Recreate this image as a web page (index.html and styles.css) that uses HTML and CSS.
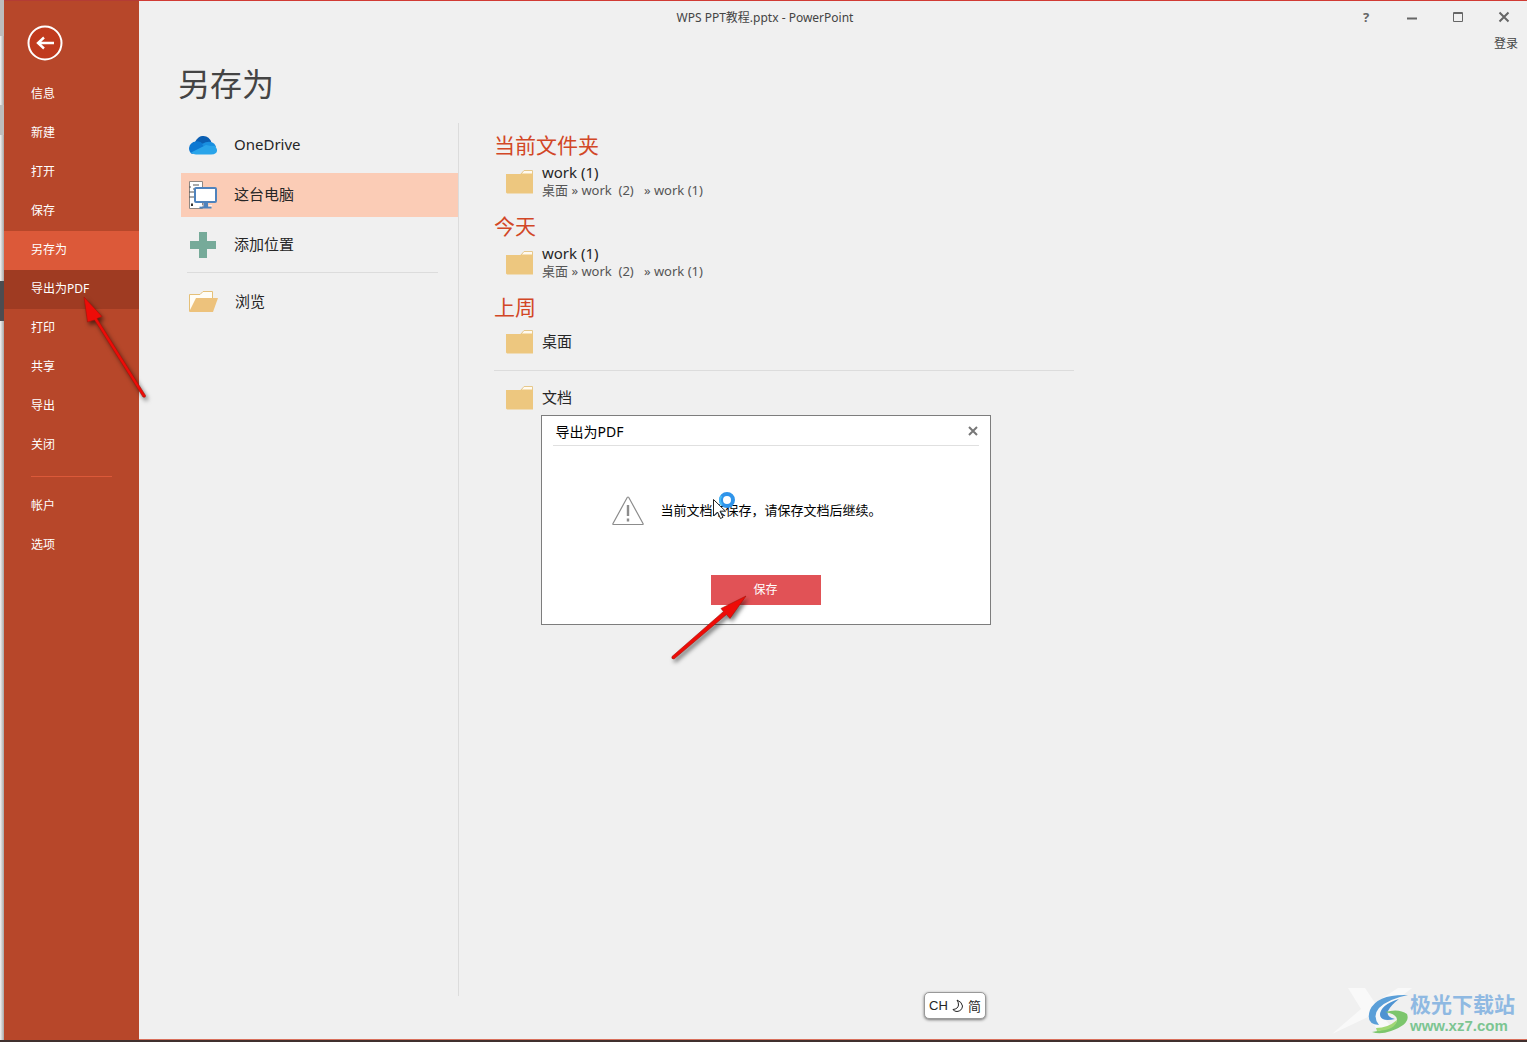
FILE: index.html
```html
<!DOCTYPE html>
<html lang="zh-CN">
<head>
<meta charset="utf-8">
<title>WPS PPT教程.pptx - PowerPoint</title>
<link rel="stylesheet" href="styles.css">
</head>
<body>
<svg class="defs" aria-hidden="true">
  <symbol id="folder" viewBox="0 0 28 25">
    <path d="M15 5 18 1.500H26.500V7H15z" fill="#fffaf0" stroke="#e6c88c"/>
    <path d="M0 5H14L16 4.500H27V24.500H1L0 23.500z" fill="#edc77f"/>
  </symbol>
</svg>
<div class="window">
  <div class="desktop-edge"><span class="edge-mark edge-top"></span><span class="edge-mark edge-mid"></span><span class="edge-mark edge-dark"></span></div>
  <aside class="sidebar">
    <button class="back" type="button" aria-label="返回">
      <svg width="36" height="36" viewBox="0 0 36 36" fill="none" stroke="#fff"><circle cx="18" cy="18" r="16.500" fill="#c03a1e" stroke-width="2"/><path d="M11 18H27M17 12.500 11 18 17 23.500" stroke-width="2.400"/></svg>
    </button>
    <nav class="menu">
      <a href="#">信息</a>
      <a href="#">新建</a>
      <a href="#">打开</a>
      <a href="#">保存</a>
      <a href="#" class="selected">另存为</a>
      <a href="#" class="hovered">导出为PDF
        <svg class="pointer-nav" width="76" height="116" viewBox="0 0 76 116"><path d="M4 4 22 23.500 17 25.500 65.500 102.500Q66 105 63 104L14.500 27 7.500 29z" fill="#ee0c08" stroke="#a51208" stroke-width=".6"/></svg>
      </a>
      <a href="#">打印</a>
      <a href="#">共享</a>
      <a href="#">导出</a>
      <a href="#">关闭</a>
      <hr>
      <a href="#">帐户</a>
      <a href="#">选项</a>
    </nav>
  </aside>
  <main class="backstage">
    <header class="titlebar">
      <div class="title">WPS PPT教程.pptx - PowerPoint</div>
      <div class="controls">
        <button type="button" class="help" aria-label="帮助">?</button>
        <button type="button" aria-label="最小化"><svg width="12" height="12"><path d="M1 7.500H11" stroke="#666" stroke-width="2"/></svg></button>
        <button type="button" aria-label="最大化"><svg width="12" height="12"><path d="M1.500 1.500H10.500V10.500H1.500zM1 2.500H11" fill="none" stroke="#666"/></svg></button>
        <button type="button" aria-label="关闭"><svg width="12" height="12"><path d="M1.500 1.500 10.500 10.500M10.500 1.500 1.500 10.500" stroke="#666" stroke-width="2"/></svg></button>
      </div>
    </header>
    <a href="#" class="login">登录</a>
    <h1>另存为</h1>
    <div class="content">
      <section class="places">
        <button type="button"><svg width="28" height="28" viewBox="0 0 28 28">
          <path d="M6 11Q9 5.500 13 5Q20 4 22.500 11.500L15 18z" fill="#0a5eb2"/>
          <path d="M0 17Q1 11 7 10.500Q11 9.500 14 13L19 16 3 23Q0 21 0 17z" fill="#0d78d2"/>
          <path d="M13 13Q18 10 22 11 26 12 27 16L16 17z" fill="#198fe0"/>
          <path d="M2 21.500 17 14Q20 15 26 15 29.500 19 27 22 25 23.500 22 23.500H7Q4.500 23.500 2 21.500z" fill="#29a4ea"/></svg><span>OneDrive</span></button>
        <button type="button" class="current"><svg width="28" height="28" viewBox="0 0 28 28">
          <path d="M.5.5H13.500V27.500H.5z" fill="#fff" stroke="#8f8883"/><path d="M4 4H10M4 8H8M0 6H2M0 11H6M0 16H5" stroke="#555"/><path d="M3 22.500V25" stroke="#333" stroke-width="2"/>
          <rect x="6" y="7" width="21" height="14" rx="1" fill="#fff" stroke="#4f83bd" stroke-width="2"/><path d="M14.500 22H19V25.500H22.500V27.500H10.500V25.500H14.500z" fill="#4f83bd"/><path d="M10 24.800H14M19.500 24.800H23" stroke="#fff"/></svg><span>这台电脑</span></button>
        <button type="button"><svg width="28" height="28" viewBox="0 0 28 28"><path d="M10 1H18V10H27V18H18V27H10V18H1V10H10z" fill="#76aa99"/></svg><span>添加位置</span></button>
        <hr>
        <button type="button"><svg width="29" height="28" viewBox="0 0 29 28"><path d="M.5 23V6.500H11L14 3.500H23.500V13" fill="#fffdf6" stroke="#e5c078"/><path d="M7 10H29L24 24H0z" fill="#edc27c"/></svg><span>浏览</span></button>
      </section>
      <section class="recent">
        <h2>当前文件夹</h2>
        <a href="#" class="entry detailed"><svg width="28" height="25"><use href="#folder"/></svg><span><b>work (1)</b><small>桌面 » work&nbsp; (2)&nbsp; &nbsp;» work (1)</small></span></a>
        <h2>今天</h2>
        <a href="#" class="entry detailed"><svg width="28" height="25"><use href="#folder"/></svg><span><b>work (1)</b><small>桌面 » work&nbsp; (2)&nbsp; &nbsp;» work (1)</small></span></a>
        <h2>上周</h2>
        <a href="#" class="entry"><svg width="28" height="25"><use href="#folder"/></svg><span><b>桌面</b></span></a>
        <hr>
        <a href="#" class="entry"><svg width="28" height="25"><use href="#folder"/></svg><span><b>文档</b></span></a>
      </section>
    </div>
  </main>
</div>
<footer class="taskbar"></footer>

<section class="modal" role="dialog" aria-labelledby="modal-title">
  <header><h3 id="modal-title">导出为PDF</h3>
    <button type="button" class="dismiss" aria-label="关闭"><svg width="10" height="10"><path d="M1 1 9 9M9 1 1 9" stroke="#777" stroke-width="2"/></svg></button></header>
  <div class="message">
    <svg width="32" height="30" viewBox="0 0 32 30" fill="none" stroke="#8c8c8c"><path d="M15.200 1.500Q16 .5 16.800 1.500L31 27.500Q31.500 28.500 30.500 28.500H1.500Q.5 28.500 1 27.500z" stroke-width="1.200"/><path d="M16 9V20M16 22.500V25.500" stroke-width="2.400"/></svg>
    <p>当前文档未保存，请保存文档后继续。</p>
  </div>
  <button type="button" class="save">保存</button>
  <svg class="cursor" width="26" height="32" viewBox="0 0 26 32"><circle cx="15" cy="9" r="6" fill="#fff" stroke="#2f94ea" stroke-width="4"/><path d="M9.500 5A7 7 0 0 0 10 14" fill="none" stroke="#48bdf5" stroke-width="2"/><path d="M1.500 8.500V25L5.500 21 8.500 27.500 11 26.300 8 20.200H13.500z" fill="#fff" stroke="#222"/></svg>
  <svg class="pointer-save" width="90" height="76" viewBox="0 0 90 76"><path d="M79 4 63 26.500 59.500 22.500 7 67Q4 67 5 64.500L56.500 19.500 54 16.500z" fill="#ee0c08" stroke="#a51208" stroke-width=".6"/></svg>
</section>

<div class="ime">CH <svg width="12" height="14" viewBox="0 0 12 14"><path d="M5 1Q10 3 10.500 7 10 12 5 12.500 2 12.500 1 10.500 6 10 6.500 6 6.500 3 5 1z" fill="none" stroke="#222"/></svg> 简</div>

<div class="watermark">
  <svg class="ghost" width="100" height="52" viewBox="0 0 100 52"><path d="M16 2H33L43 17 66 2H80L48 27 61 43H45L36 31 0 48 29 23z" fill="#fff" opacity=".6"/></svg>
  <svg class="swirl" width="42" height="42" viewBox="0 0 42 42"><path d="M40 2Q9 1 2 17Q-3 31 11 32Q4 23 11 15 20 6 40 2z" fill="#5b9fd8"/><path d="M31 6Q12 12 12 22Q13 29 27 26Q18 24 20 18 23 12 31 6z" fill="#4e93d2"/><path d="M17 19Q31 15 39 21Q43 31 23 38Q12 42 4 39Q28 35 29 27Q29 21 17 19z" fill="#7cc66d"/><path d="M8 35Q20 35 29 27Q28 37 9 38z" fill="#a1d874"/></svg>
  <div class="brand"><strong>极光下载站</strong><span>www.xz7.com</span></div>
</div>
</body>
</html>
```
FILE: styles.css
```css
* { box-sizing: border-box; }

body {
  margin: 0;
  min-height: 100vh;
  display: flex;
  flex-direction: column;
  position: relative;
  background: #f0f0f0;
  color: #262626;
  font-family: "Noto Sans", "Noto Sans CJK SC", sans-serif;
  font-size: 12px;
}

button {
  border: 0;
  padding: 0;
  background: none;
  color: inherit;
  font: inherit;
}

a { color: inherit; text-decoration: none; }
h1, h2, h3, p { margin: 0; font-weight: 400; }
hr { border: 0; height: 1px; margin: 0; background: #dcdcdc; }
svg { display: block; flex: none; }
.defs { position: absolute; width: 0; height: 0; }

.window { flex: 1; display: flex; }

.desktop-edge {
  position: relative;
  width: 4px;
  background: linear-gradient(90deg, #f2f2f2, #a8a8a8);
}
.edge-mark { position: absolute; left: 0; width: 4px; background: #bdbdbd; }
.edge-top { top: 0; height: 36px; }
.edge-mid { top: 105px; height: 30px; }
.edge-dark { top: 281px; height: 40px; background: #4c4c50; }

/* Navigation */
.sidebar {
  flex: none;
  width: 135px;
  background: #b7472a;
  border-top: 1px solid #b43c35;
  color: #fff;
}
.back { display: block; margin: 24px 0 14px 23px; }
.menu a {
  position: relative;
  display: block;
  height: 39px;
  padding-left: 27px;
  line-height: 38px;
}
.menu hr { margin: 11px 27px 10px; background: #dc5939; }
.menu .selected { background: #dc5939; }
.menu .hovered { background: #9f3b22; }
.pointer-nav {
  position: absolute;
  z-index: 2;
  left: 76px;
  top: 23px;
  filter: drop-shadow(2px 3px 2px #0008);
}

/* Save as page */
.backstage {
  flex: 1;
  display: flex;
  flex-direction: column;
  border-top: 1px solid #d13b34;
  border-bottom: 1px solid #d9705c;
}
.titlebar { display: flex; height: 32px; color: #444; }
.title { flex: 1; padding-left: 48px; text-align: center; line-height: 34px; }
.controls { display: flex; }
.controls button { width: 46px; display: grid; place-items: center; color: #666; }
.controls .help { font-size: 13px; font-weight: 700; }
.login { align-self: flex-end; margin-right: 9px; line-height: 22px; color: #444; }
h1 { padding-left: 39px; font-size: 32px; line-height: 48px; margin: 5px 0 15px; color: #444; }
.content { flex: 1; display: flex; padding: 0 0 43px 42px; }

.places {
  flex: none;
  width: 278px;
  border-right: 1px solid #dcdcdc;
}
.places button {
  display: flex;
  align-items: center;
  gap: 17px;
  width: 100%;
  height: 44px;
  margin-bottom: 6px;
  padding-left: 8px;
  font-size: 15px;
}
.places span { padding-bottom: 3px; }
.places .current { background: #fbccb6; }
.places hr { margin: -1px 20px 7px 6px; }

.recent { flex: 1; padding: 8px 0 0 35px; max-width: 615px; }
h2 { font-size: 21px; line-height: 28px; color: #d24726; }
.entry { display: flex; align-items: center; gap: 8px; height: 40px; padding-left: 12px; }
.detailed { height: 44px; margin-bottom: 9px; }
.entry b { display: block; font-size: 15px; line-height: 18px; font-weight: 400; }
.entry small { display: block; font-size: 13px; line-height: 18px; color: #555; }
.recent hr { margin: 9px 0 6px; }

.taskbar { height: 2px; background: #40302e; }

/* Export prompt */
.modal {
  position: absolute;
  left: calc(50% - 223px);
  top: 415px;
  width: 450px;
  padding: 0 11px 19px;
  border: 1px solid #7d7d7d;
  background: #fff;
  color: #000;
}
.modal header {
  display: flex;
  justify-content: space-between;
  height: 30px;
  padding: 0 0 0 3px;
  border-bottom: 1px solid #e0e0e0;
}
h3 { font-size: 14px; line-height: 32px; }
.dismiss { width: 12px; display: grid; place-items: center; }
.message { display: flex; align-items: center; gap: 17px; height: 129px; padding-left: 59px; font-size: 13px; }
.message p { padding-bottom: 2px; }
.save { display: block; width: 110px; height: 30px; margin: 0 auto; padding-bottom: 2px; background: #e15256; color: #fff; }
.cursor { position: absolute; left: 170px; top: 75px; }
.pointer-save { position: absolute; left: 125px; top: 176px; filter: drop-shadow(2px 3px 2px #0008); }

/* Input method badge */
.ime {
  position: absolute;
  right: 541px;
  bottom: 23px;
  display: flex;
  align-items: center;
  justify-content: center;
  gap: 4px;
  width: 62px;
  height: 27px;
  border: 1px solid #999;
  border-radius: 5px;
  background: #fff;
  box-shadow: 0 1px 3px #0008;
  font-family: "Liberation Sans", "Noto Sans CJK SC", sans-serif;
  font-size: 13px;
}

/* Site mark */
.watermark { position: absolute; right: 12px; bottom: 7px; display: flex; align-items: center; }
.ghost { position: absolute; left: -36px; top: -7px; }
.swirl { position: relative; }
.brand { position: relative; font-family: "Liberation Sans", "Noto Sans CJK SC", sans-serif; }
.brand strong { display: block; font-size: 21px; line-height: 24px; font-weight: 700; color: #8fb9e2; }
.brand span { display: block; font-size: 15px; line-height: 18px; font-weight: 700; color: #7cc592; }
```
